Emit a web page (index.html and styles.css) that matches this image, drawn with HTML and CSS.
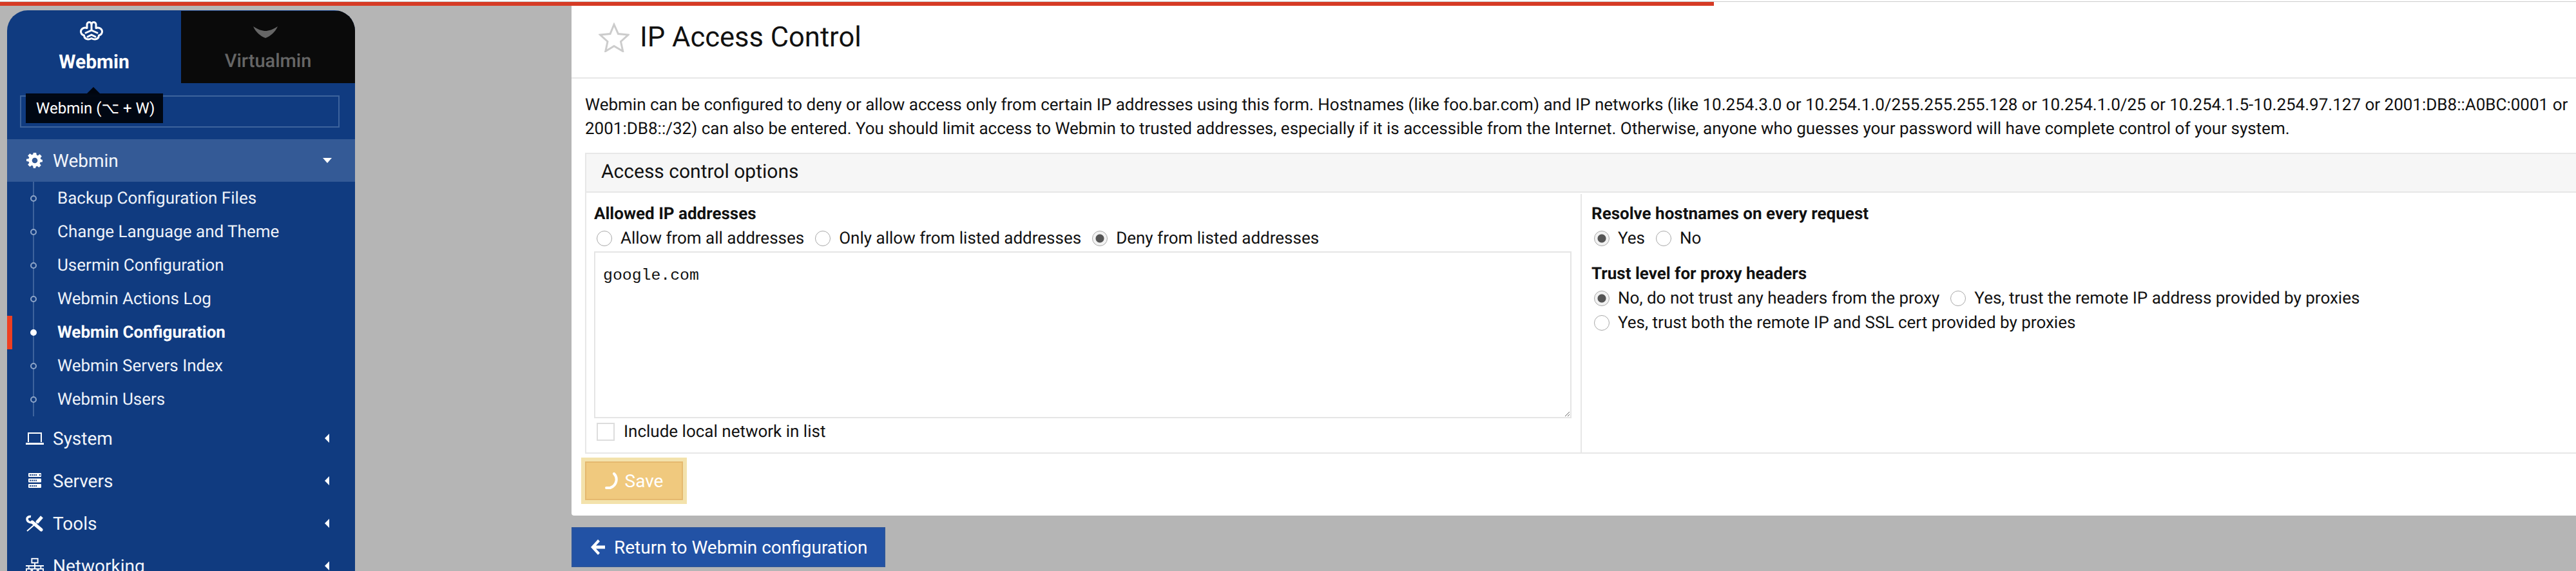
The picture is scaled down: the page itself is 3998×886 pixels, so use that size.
FILE: index.html
```html
<!DOCTYPE html>
<html lang="en">
<head>
  <meta charset="UTF-8">
  <title>IP Access Control</title>
  <link rel="stylesheet" href="styles.css">
</head>
<body>
  <div class="progress"></div>
  <div class="layout">
    <aside class="sidebar">
      <div class="tabs">
        <div class="tab tab-active">
          <svg class="tab-icon" width="36" height="32" viewBox="0 0 36 32" fill="none" stroke="#fff" stroke-width="3" stroke-linejoin="round" stroke-linecap="round">
            <path d="M11 11.500V6a3.500 3.500 0 0 1 7 0 3.500 3.500 0 0 1 7 0v5.500c4-1.500 9.500.5 9.500 5.500 0 3-2 5-5 6 0 5-5.500 8-11.500 4.500C12 31 6.500 28 6.500 23c-3-1-5-3-5-6 0-5 5.500-7 9.500-5.500z"/>
            <path d="M18 6v9M9 19l9-4 9 4M12 25l6-3 6 3"/>
          </svg>
          <span>Webmin</span>
        </div>
        <div class="tab tab-dark">
          <svg class="tab-icon" width="38" height="18" viewBox="0 0 38 18" fill="#666">
            <path d="M0 0C8 5 14 7 19 7 24 7 30 5 38 0 34 9 27 15 19 18 11 15 4 9 0 0z"/>
          </svg>
          <span>Virtualmin</span>
        </div>
      </div>
      <div class="tooltip">Webmin (⌥ + W)</div>
      <div class="search"><span class="search-text">Search</span></div>
      <nav>
        <div class="menu-item menu-open">
          <svg class="menu-icon" width="28" height="26" viewBox="0 0 24 24" fill="#fff"><path fill-rule="evenodd" d="M10 1h4l.6 3.200 1.800.8L19 3l3 3-2 2.600.8 1.800L23 11v3l-3.200.6-.8 1.800L21 19l-3 3-2.600-2-1.800.8L13 23h-3l-.6-3.200-1.800-.8L5 21l-3-3 2-2.600-.8-1.800L0 13v-3l3.200-.6.8-1.800L2 5l3-3 2.600 2 1.800-.8zM12 8a4 4 0 1 0 0 8 4 4 0 0 0 0-8z"/></svg>
          <span class="menu-label">Webmin</span>
          <span class="caret-down"></span>
        </div>
        <ul class="submenu">
          <li>Backup Configuration Files</li>
          <li>Change Language and Theme</li>
          <li>Usermin Configuration</li>
          <li>Webmin Actions Log</li>
          <li class="current">Webmin Configuration</li>
          <li>Webmin Servers Index</li>
          <li>Webmin Users</li>
        </ul>
        <div class="menu-item">
          <svg class="menu-icon" width="28" height="20" viewBox="0 0 28 20" fill="none" stroke="#fff" stroke-width="2"><path d="M4 16V2h20v14"/><path d="M0 18.500h28" stroke-width="3"/></svg>
          <span class="menu-label">System</span>
          <span class="caret-left"></span>
        </div>
        <div class="menu-item">
          <svg class="menu-icon" width="28" height="24" viewBox="0 0 28 24" fill="#fff"><path fill-rule="evenodd" d="M5 0h18a1 1 0 0 1 1 1v4a1 1 0 0 1-1 1H5a1 1 0 0 1-1-1V1a1 1 0 0 1 1-1zM5 8.500h18a1 1 0 0 1 1 1v4a1 1 0 0 1-1 1H5a1 1 0 0 1-1-1v-4a1 1 0 0 1 1-1zM5 17h18a1 1 0 0 1 1 1v4a1 1 0 0 1-1 1H5a1 1 0 0 1-1-1v-4a1 1 0 0 1 1-1zM6 2v2h2V2zM9 2v2h2V2zM12 2v2h2V2zM15 2v2h2V2zM21 2v2h2V2zM6 10.500v2h2v-2zM9 10.500v2h2v-2zM12 10.500v2h2v-2zM15 10.500v2h2v-2zM6 19v2h2v-2zM9 19v2h2v-2zM12 19v2h2v-2zM15 19v2h2v-2z"/></svg>
          <span class="menu-label">Servers</span>
          <span class="caret-left"></span>
        </div>
        <div class="menu-item">
          <svg class="menu-icon" width="28" height="26" viewBox="0 0 28 26" fill="none" stroke="#fff"><path d="M8 2.500C4 2 2 4.500 2 6c0 4 4 6.500 8 5.500" stroke-width="3.500"/><path d="M10 11l14 12" stroke-width="5" stroke-linecap="round"/><path d="M25 3l-8 9" stroke-width="5"/><path d="M17 12L2 25" stroke-width="2"/></svg>
          <span class="menu-label">Tools</span>
          <span class="caret-left"></span>
        </div>
        <div class="menu-item">
          <svg class="menu-icon" width="30" height="26" viewBox="0 0 30 26" fill="none" stroke="#fff" stroke-width="2"><rect x="10" y="1" width="10" height="7"/><rect x="1" y="18" width="8" height="7"/><rect x="11" y="18" width="8" height="7"/><rect x="21" y="18" width="8" height="7"/><path d="M15 8v5M0 13h30M5 13v5M25 13v5M15 13v5"/></svg>
          <span class="menu-label">Networking</span>
          <span class="caret-left"></span>
        </div>
      </nav>
    </aside>

    <main class="content">
      <div class="panel">
        <div class="panel-header">
          <svg class="star" width="48" height="46" viewBox="0 0 48 46" fill="none" stroke="#ccc" stroke-width="3"><path d="M24 3l6.500 14.500 15.500 1.500-11.500 10.500 3.200 15L24 36.500 10.800 44.500l3.200-15L2.500 19 18 17.500z"/></svg>
          <h1>IP Access Control</h1>
        </div>
        <p class="intro">Webmin can be configured to deny or allow access only from certain IP addresses using this form. Hostnames (like foo.bar.com) and IP networks (like 10.254.3.0 or 10.254.1.0/255.255.255.128 or 10.254.1.0/25 or 10.254.1.5-10.254.97.127 or 2001:DB8::A0BC:0001 or 2001:DB8::/32) can also be entered. You should limit access to Webmin to trusted addresses, especially if it is accessible from the Internet. Otherwise, anyone who guesses your password will have complete control of your system.</p>
        <div class="options">
          <div class="options-head">Access control options</div>
          <div class="options-body">
            <div class="cell cell-left">
              <div class="field-title">Allowed IP addresses</div>
              <div class="radio-row">
                <label><input type="radio" name="access">Allow from all addresses</label>
                <label><input type="radio" name="access">Only allow from listed addresses</label>
                <label><input type="radio" name="access" checked>Deny from listed addresses</label>
              </div>
              <textarea class="hosts" spellcheck="false">google.com</textarea>
              <label class="check-row"><input type="checkbox">Include local network in list</label>
            </div>
            <div class="cell cell-right">
              <div class="field-title">Resolve hostnames on every request</div>
              <div class="radio-row">
                <label><input type="radio" name="resolve" checked>Yes</label>
                <label><input type="radio" name="resolve">No</label>
              </div>
              <div class="field-title field-second">Trust level for proxy headers</div>
              <div class="radio-row">
                <label><input type="radio" name="trust" checked>No, do not trust any headers from the proxy</label>
                <label><input type="radio" name="trust">Yes, trust the remote IP address provided by proxies</label>
              </div>
              <div class="radio-row">
                <label><input type="radio" name="trust">Yes, trust both the remote IP and SSL cert provided by proxies</label>
              </div>
            </div>
          </div>
        </div>
        <button class="save" type="button">
          <svg width="22" height="26" viewBox="0 0 22 26" fill="none" stroke="#fff" stroke-width="4" stroke-linecap="round"><path d="M14 2c6 6 5 18-6 22H2"/></svg>
          Save
        </button>
      </div>
      <button class="return" type="button">
        <svg width="22" height="24" viewBox="0 0 22 24" fill="#fff"><path d="M11 0l3 3-6 6.500h14v5H8l6 6.500-3 3L0 12z"/></svg>
        Return to Webmin configuration
      </button>
    </main>
  </div>
</body>
</html>
```

FILE: styles.css
```css
html, body {
  height: 100%;
}
body {
  font-family: Roboto, sans-serif;
  text-rendering: geometricPrecision;
  margin: 0;
  background-color: #b5b5b5;
  color: #111;
  overflow: hidden;
}
.progress {
  position: absolute;
  top: 3px;
  left: 0;
  width: 2660px;
  height: 6px;
  background-color: #d63b25;
  z-index: 5;
}
.layout {
  display: flex;
  align-items: flex-start;
  padding-top: 3px;
  background-color: #b5b5b5;
  background-image: linear-gradient(#fff 2px, #ccc 2px, #ccc 3px, transparent 3px);
}

/* sidebar */
.sidebar {
  position: relative;
  width: 540px;
  height: 870px;
  flex: none;
  margin: 13px 0 0 11px;
  background-color: #103b80;
  border-radius: 32px 32px 0 0;
  color: #eef2f9;
  overflow: hidden;
}
.tabs {
  display: flex;
  height: 113px;
}
.tab {
  width: 270px;
  display: flex;
  flex-direction: column;
  align-items: center;
  font-size: 29px;
  font-weight: 500;
}
.tab-active {
  color: #fff;
  font-size: 30px;
  font-weight: 700;
  padding-top: 16px;
  box-sizing: border-box;
}
.tab-active span {
  margin-top: 15px;
}
.tab-icon {
  flex: none;
  margin-right: 8px;
}
.tab-dark {
  background-color: #0a0a0a;
  color: #666;
  margin-top: 1px;
  padding-top: 24px;
  box-sizing: border-box;
}
.tab-dark span {
  margin-top: 19px;
}
.tooltip {
  position: absolute;
  left: 29px;
  top: 129px;
  width: 213px;
  height: 46px;
  line-height: 46px;
  box-sizing: border-box;
  padding-left: 16px;
  white-space: nowrap;
  font-size: 24px;
  color: #fff;
  background-color: rgba(0, 5, 15, 0.97);
  z-index: 2;
}
.tooltip::before {
  content: "";
  position: absolute;
  left: 95px;
  top: -10px;
  border-left: 10px solid transparent;
  border-right: 10px solid transparent;
  border-bottom: 10px solid #00050f;
}
.search {
  margin: 19px 24px 18px 20px;
  height: 50px;
  border: 2px solid #3d639c;
  box-sizing: border-box;
  padding-left: 52px;
  line-height: 46px;
  font-size: 26px;
}
.search-text {
  color: #2b5088;
}
.menu-item {
  display: flex;
  align-items: center;
  height: 66px;
  padding-left: 29px;
  font-size: 28px;
  color: #f2f5fa;
}
.menu-open {
  background-color: #345a96;
}
.menu-icon {
  width: 28px;
  flex: none;
}
.menu-label {
  margin-left: 14px;
  flex: 1;
}
.caret-down {
  margin-right: 36px;
  border-left: 7px solid transparent;
  border-right: 7px solid transparent;
  border-top: 8px solid #fff;
}
.caret-left {
  margin-right: 40px;
  border-top: 7px solid transparent;
  border-bottom: 7px solid transparent;
  border-right: 7px solid #fff;
}
.submenu {
  position: relative;
  list-style: none;
  margin: 0 0 1px;
  padding: 0;
}
.submenu::before {
  content: "";
  position: absolute;
  left: 40px;
  top: 0;
  bottom: 0;
  width: 2px;
  background-color: #3d639c;
}
.submenu li {
  position: relative;
  height: 52px;
  line-height: 52px;
  padding-left: 78px;
  font-size: 26px;
}
.submenu li::before {
  content: "";
  position: absolute;
  left: 36px;
  top: 21px;
  width: 10px;
  height: 10px;
  box-sizing: border-box;
  border: 2px solid #8ea5c8;
  border-radius: 50%;
  background-color: #103b80;
}
.submenu li.current {
  font-weight: 700;
  color: #fff;
}
.submenu li.current::before {
  border-color: #fff;
  background-color: #fff;
}
.submenu li.current::after {
  content: "";
  position: absolute;
  left: 0;
  top: 0;
  width: 8px;
  height: 52px;
  background-color: #ee3f22;
}

/* main */
.content {
  flex: 1;
  min-width: 0;
  margin-left: 336px;
}
.panel {
  background-color: #fff;
  border-radius: 0 0 0 4px;
  padding-bottom: 24px;
}
.panel-header {
  display: flex;
  align-items: center;
  height: 119px;
  padding: 6px 0 14px 42px;
  box-sizing: border-box;
  border-bottom: 2px solid #e7e7e7;
  gap: 16px;
}
h1 {
  margin: 0;
  font-size: 43.500px;
  font-weight: 400;
  color: #111;
}
.intro {
  margin: 23px 10px 19px 21px;
  font-size: 26px;
  line-height: 36.500px;
}
.options {
  margin-left: 21px;
  border-top: 2px solid #e7e7e7;
  border-left: 2px solid #e7e7e7;
  border-bottom: 2px solid #e7e7e7;
}
.options-head {
  height: 58px;
  line-height: 56px;
  padding-left: 23px;
  background-color: #f6f6f6;
  border-bottom: 2px solid #e7e7e7;
  font-size: 30px;
}
.options-body {
  display: flex;
  height: 403px;
}
.cell {
  padding-top: 15px;
  box-sizing: border-box;
}
.cell-left {
  width: 1543px;
  padding-left: 12px;
  flex: none;
}
.cell-right {
  flex: 1;
  margin-top: 2px;
  padding-top: 13px;
  padding-left: 15px;
  border-left: 2px solid #e7e7e7;
}
.field-title {
  font-size: 26px;
  font-weight: 700;
  line-height: 36px;
  height: 36px;
}
.field-second {
  margin-top: 19px;
}
.radio-row {
  display: flex;
  height: 36px;
  margin-top: 2px;
  font-size: 26px;
  gap: 17px;
  padding-left: 4px;
}
.radio-row label {
  display: flex;
  align-items: center;
}
.radio-row input {
  appearance: none;
  width: 24px;
  height: 24px;
  margin: 0 13px 0 0;
  border: 1px solid #a8a8a8;
  border-radius: 50%;
  background-color: #fff;
}
.radio-row input:checked {
  background: radial-gradient(circle, #555 0 6px, #f2f2f2 7px);
}
.hosts {
  display: block;
  width: 1517px;
  height: 259px;
  margin-top: 2px;
  padding: 20px 12px;
  box-sizing: border-box;
  border: 2px solid #e5e5e5;
  border-radius: 0;
  outline: none;
  font-family: "Liberation Mono", monospace;
  font-size: 24.800px;
  line-height: 30px;
  color: #111;
}
.check-row {
  display: flex;
  align-items: center;
  margin-top: 6px;
  padding-left: 4px;
  font-size: 26px;
  height: 30px;
}
.check-row input {
  appearance: none;
  width: 28px;
  height: 28px;
  margin: 0 14px 0 0;
  border: 2px solid #ddd;
  background-color: #fff;
}
.save {
  display: flex;
  align-items: center;
  justify-content: center;
  gap: 9px;
  width: 152px;
  height: 60px;
  margin: 12px 0 0 21px;
  border: 2px solid #e5b96f;
  background-color: #f0c97e;
  box-shadow: 0 0 0 6px #f3e2ac;
  color: #fff;
  font-family: Roboto, sans-serif;
  font-size: 28px;
  padding: 0;
}
.return {
  display: flex;
  align-items: center;
  gap: 14px;
  width: 487px;
  height: 62px;
  margin-top: 18px;
  padding: 0 0 0 28px;
  border: 2px solid #2a549c;
  background-color: #2252a5;
  color: #fff;
  font-family: Roboto, sans-serif;
  font-size: 28px;
}
```
